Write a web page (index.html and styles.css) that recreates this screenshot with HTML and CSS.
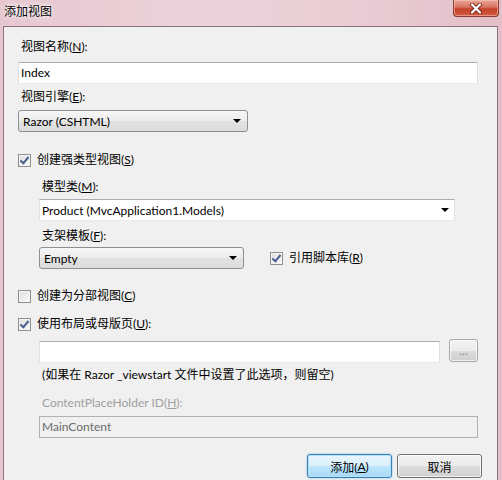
FILE: index.html
```html
<!DOCTYPE html>
<html lang="zh-CN">
<head>
    <meta charset="UTF-8">
    <title>添加视图</title>
    <link rel="stylesheet" href="styles.css">
</head>
<body>
    <div class="window">
        <div class="titlebar">
            <span class="title">添加视图</span>
            <div class="close">
                <svg width="14" height="11" viewBox="0 0 14 11">
                    <path d="M3 1.5 L11 9.5 M11 1.5 L3 9.5" stroke="#7a2a22" stroke-width="4" stroke-linecap="round"/>
                    <path d="M3 1.5 L11 9.5 M11 1.5 L3 9.5" stroke="#fff" stroke-width="2.2" stroke-linecap="round"/>
                </svg>
            </div>
        </div>

        <div class="client">
            <div class="field-label first">视图名称(<u>N</u>):</div>
            <div class="textbox name-box">Index</div>

            <div class="field-label">视图引擎(<u>E</u>):</div>
            <div class="dropdown engine">
                <span>Razor (CSHTML)</span>
                <span class="arrow"></span>
            </div>

            <div class="check-row strong">
                <span class="checkbox checked"></span>
                <span>创建强类型视图(<u>S</u>)</span>
            </div>

            <div class="sub">
                <div class="field-label model-label">模型类(<u>M</u>):</div>
                <div class="combo model">
                    <span>Product (MvcApplication1.Models)</span>
                    <span class="arrow"></span>
                </div>

                <div class="field-label scaffold-label">支架模板(<u>F</u>):</div>
                <div class="scaffold-row">
                    <div class="dropdown scaffold">
                        <span>Empty</span>
                        <span class="arrow"></span>
                    </div>
                    <div class="check-row inline">
                        <span class="checkbox checked"></span>
                        <span>引用脚本库(<u>R</u>)</span>
                    </div>
                </div>
            </div>

            <div class="check-row partial">
                <span class="checkbox"></span>
                <span>创建为分部视图(<u>C</u>)</span>
            </div>

            <div class="check-row layout">
                <span class="checkbox checked"></span>
                <span>使用布局或母版页(<u>U</u>):</span>
            </div>

            <div class="sub">
                <div class="layout-row">
                    <div class="textbox layout-box"></div>
                    <div class="btn browse">...</div>
                </div>
                <div class="note">(如果在 Razor _viewstart 文件中设置了此选项，则留空)</div>

                <div class="field-label disabled holder-label">ContentPlaceHolder ID(<u>H</u>):</div>
                <div class="textbox disabled-box">MainContent</div>
            </div>

            <div class="actions">
                <div class="btn default">添加(<u>A</u>)</div>
                <div class="btn">取消</div>
            </div>
        </div>
    </div>
</body>
</html>
```

FILE: styles.css
```css
body {
    margin: 0;
    font-family: Lato, "Noto Sans CJK SC", sans-serif;
    font-size: 12px;
    color: #000;
}
u {
    text-decoration: underline;
    text-underline-offset: 1px;
}
.window {
    width: 502px;
    height: 480px;
    display: flex;
    flex-direction: column;
    background: linear-gradient(90deg, #e6c7d0, #ecd3da 40%, #e9cdd5 70%, #e2bfc9);
    overflow: hidden;
}
.titlebar {
    height: 26px;
    display: flex;
    align-items: flex-start;
    flex-shrink: 0;
}
.title {
    padding: 4px 0 0 4px;
    line-height: 16px;
    text-shadow: 0 0 6px #fff, 0 0 3px #fff;
}
.close {
    margin-left: auto;
    margin-right: 3px;
    width: 46px;
    height: 17px;
    border: 1px solid #8a3a30;
    border-top: none;
    border-radius: 0 0 4px 4px;
    background: linear-gradient(#eaa699, #d9705e 45%, #c4402c 55%, #d45a3f);
    box-shadow: inset 0 0 0 1px rgba(255, 210, 200, 0.5);
    display: flex;
    align-items: center;
    justify-content: center;
    box-sizing: border-box;
}
.client {
    flex: 1;
    margin: 0 4px 0 3px;
    background: #f0f0f0;
    border: 1px solid #8d7279;
    border-bottom: none;
    padding: 12px 19px 0 14px;
}
.field-label {
    height: 16px;
    line-height: 16px;
    padding-left: 3px;
    margin-top: 5px;
}
.field-label.first {
    margin-top: 0;
}
.field-label.disabled {
    color: #a0a0a0;
}
.textbox {
    height: 22px;
    box-sizing: border-box;
    background: #fff;
    border: 1px solid #dbdfe6;
    border-top-color: #abadb3;
    border-bottom-color: #e3e9ef;
    padding-left: 2px;
    line-height: 19px;
}
.name-box {
    margin-top: 7px;
}
.dropdown {
    height: 22px;
    box-sizing: border-box;
    border: 1px solid #8e8f8f;
    border-radius: 3px;
    background: linear-gradient(#f6f6f6, #ececec 50%, #e2e2e2 51%, #dcdcdc);
    display: flex;
    align-items: center;
    justify-content: space-between;
    padding: 0 6px 0 4px;
}
.arrow {
    width: 0;
    height: 0;
    border-left: 4px solid transparent;
    border-right: 4px solid transparent;
    border-top: 4px solid #000;
}
.engine {
    width: 230px;
    margin-top: 5px;
}
.check-row {
    display: flex;
    align-items: center;
    gap: 6px;
    height: 16px;
    line-height: 16px;
}
.checkbox {
    width: 13px;
    height: 13px;
    box-sizing: border-box;
    border: 1px solid #8e8f8f;
    background: linear-gradient(135deg, #dcdcdc, #fbfbfb);
    box-shadow: inset 0 0 0 1px #f4f4f4;
    flex-shrink: 0;
    position: relative;
}
.checkbox.checked::after {
    content: "";
    position: absolute;
    left: 3px;
    top: 0px;
    width: 3px;
    height: 7px;
    border: solid #4a5f8f;
    border-width: 0 2px 2px 0;
    transform: rotate(40deg);
}
.check-row.strong {
    margin-top: 20px;
}
.sub {
    padding-left: 21px;
}
.model-label {
    margin-top: 11px;
}
.combo {
    height: 22px;
    box-sizing: border-box;
    background: #fff;
    border: 1px solid #dbdfe6;
    border-top-color: #abadb3;
    border-bottom-color: #e3e9ef;
    display: flex;
    align-items: center;
    justify-content: space-between;
    padding: 0 5px 0 2px;
    width: 416px;
    margin-top: 4px;
}
.scaffold-label {
    margin-top: 7px;
}
.scaffold-row {
    display: flex;
    align-items: center;
    margin-top: 3px;
}
.scaffold {
    width: 205px;
}
.check-row.inline {
    margin-left: 26px;
}
.check-row.partial {
    margin-top: 19px;
}
.check-row.layout {
    margin-top: 12px;
}
.layout-row {
    display: flex;
    align-items: flex-end;
    gap: 9px;
    margin-top: 9px;
    height: 22px;
}
.layout-box {
    width: 401px;
}
.btn {
    height: 23px;
    box-sizing: border-box;
    border: 1px solid #707070;
    border-radius: 3px;
    background: linear-gradient(#f2f2f2, #ebebeb 50%, #dddddd 51%, #cfcfcf);
    box-shadow: inset 0 0 0 1px rgba(255, 255, 255, 0.7);
    display: flex;
    align-items: center;
    justify-content: center;
}
.browse {
    width: 29px;
    color: #8a8a8a;
    border-color: #a8a8a8;
    margin-bottom: 1px;
}
.note {
    height: 16px;
    line-height: 16px;
    padding-left: 3px;
    margin-top: 4px;
}
.holder-label {
    margin-top: 12px;
}
.disabled-box {
    margin-top: 5px;
    background: #f0f0f0;
    border-color: #adb2b5;
    color: #6d6d6d;
}
.actions {
    display: flex;
    justify-content: flex-end;
    gap: 5px;
    margin: 16px -4px 0 0;
}
.actions .btn {
    width: 85px;
    height: 24px;
}
.btn.default {
    border-color: #3c7fb1;
    background: linear-gradient(#eaf6fd, #d9f0fc 50%, #bee6fd 51%, #a7d9f5);
    box-shadow: inset 0 0 0 1px #b4e2fb, 0 0 2px #6fb8e8;
}
```
